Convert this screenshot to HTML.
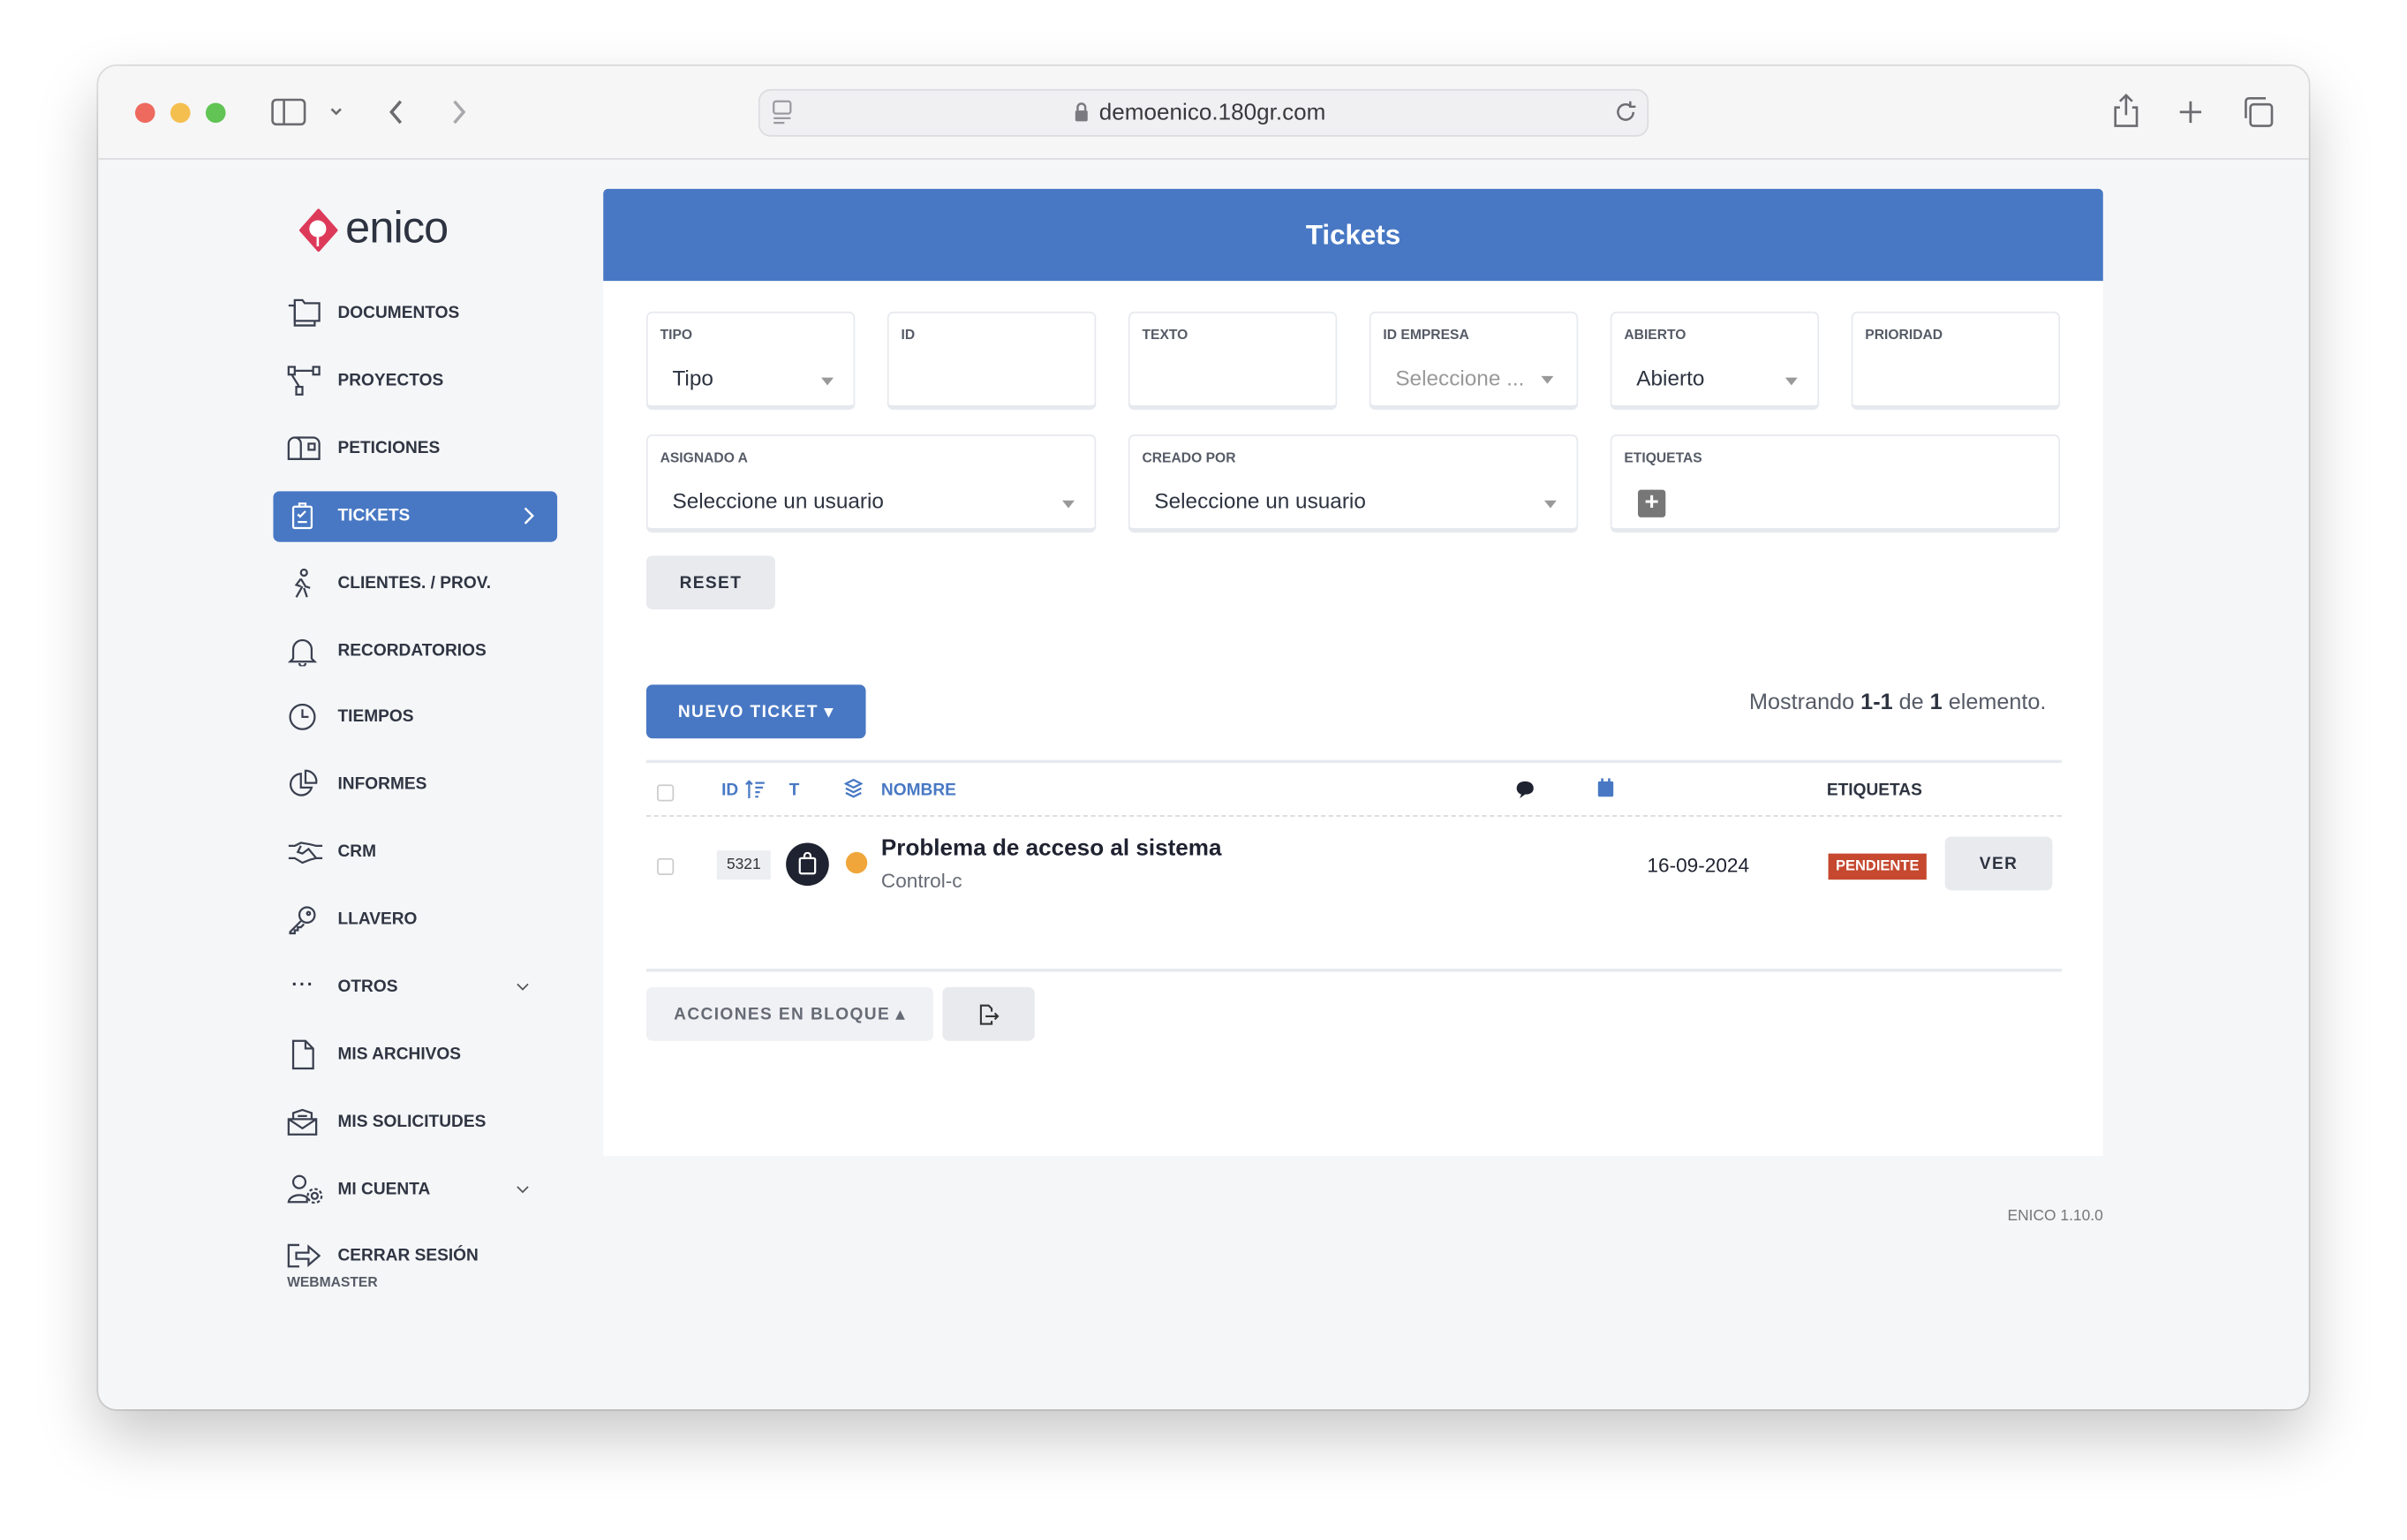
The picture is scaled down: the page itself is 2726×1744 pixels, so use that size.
<!DOCTYPE html>
<html><head><meta charset="utf-8"><style>
*{box-sizing:border-box;margin:0;padding:0}
html,body{width:2726px;height:1744px;overflow:hidden;background:#fff}
#s{position:absolute;left:0;top:0;width:1568px;height:1003px;transform:scale(1.73852);transform-origin:0 0;font-family:"Liberation Sans",sans-serif;color:#2d3340}
.a{position:absolute}
.win{left:64px;top:43px;width:1440px;height:875px;border-radius:12px;background:#f5f6f8;box-shadow:0 18px 40px rgba(0,0,0,.22),0 0 0 1px rgba(0,0,0,.12);overflow:hidden}
.tb{left:0;top:0;width:1440px;height:61px;background:#f6f6f7;border-bottom:1px solid #dcdcdf}
.dot{width:13px;height:13px;border-radius:50%;top:24px}
.mi{position:absolute;left:156px;font-size:11px;font-weight:bold;color:#2f3542;transform:translateY(-50%)}
.ic{position:absolute;left:123px;transform:translateY(-50%)}
.box{position:absolute;background:#fff;border:1.5px solid #e6e9ee;border-bottom-width:3px;border-radius:4px}
.lb{position:absolute;left:8px;top:9px;font-size:9px;font-weight:bold;color:#555b66}
.val{position:absolute;left:16px;top:34px;font-size:14px;color:#2d3340}
.car{position:absolute;top:42px;width:0;height:0;border-left:4px solid transparent;border-right:4px solid transparent;border-top:5px solid #999}
.btn{position:absolute;border-radius:4px;font-size:11px;font-weight:bold;letter-spacing:.8px;display:flex;align-items:center;justify-content:center}
</style></head><body><div id="s">
<div class="a win">
 <div class="a tb">
  <div class="a dot" style="left:24px;background:#ee6a5e"></div>
  <div class="a dot" style="left:47px;background:#f5bf4f"></div>
  <div class="a dot" style="left:70px;background:#61c454"></div>
  <svg class="a" style="left:112px;top:20px" width="24" height="20" viewBox="0 0 24 20" fill="none" stroke="#6b6b70" stroke-width="1.5"><rect x="1.5" y="2" width="21" height="16" rx="2.5"/><line x1="9" y1="2" x2="9" y2="18"/></svg>
  <svg class="a" style="left:150px;top:26px" width="10" height="8" viewBox="0 0 10 8" fill="none" stroke="#6b6b70" stroke-width="1.5"><path d="M2 2l3 3 3-3"/></svg>
  <svg class="a" style="left:188px;top:20px" width="12" height="20" viewBox="0 0 12 20" fill="none" stroke="#6b6b70" stroke-width="2"><path d="M9 3L3 10l6 7"/></svg>
  <svg class="a" style="left:229px;top:20px" width="12" height="20" viewBox="0 0 12 20" fill="none" stroke="#a8a8ac" stroke-width="2"><path d="M3 3l6 7-6 7"/></svg>
  <div class="a" style="left:430px;top:15px;width:580px;height:31px;border-radius:8px;background:#f0f0f2;border:1px solid #dcdce0"></div>
  <svg class="a" style="left:438px;top:22px" width="16" height="18" viewBox="0 0 16 18" fill="none" stroke="#9a9aa0" stroke-width="1.3"><rect x="2" y="1" width="11" height="8" rx="1.5"/><line x1="2" y1="12" x2="13" y2="12"/><line x1="2" y1="15" x2="9" y2="15"/></svg>
  <svg class="a" style="left:635px;top:23px" width="11" height="14" viewBox="0 0 11 14"><path d="M3 6V4a2.5 2.5 0 015 0v2" fill="none" stroke="#7a7a80" stroke-width="1.4"/><rect x="1.5" y="6" width="8" height="7" rx="1" fill="#7a7a80"/></svg>
  <div class="a" style="left:652px;top:22px;font-size:15px;color:#3a3a3e">demoenico.180gr.com</div>
  <svg class="a" style="left:987px;top:22px" width="16" height="16" viewBox="0 0 16 16" fill="none" stroke="#6b6b70" stroke-width="1.4"><path d="M13 8a5 5 0 11-2-4"/><path d="M11 1v3.5h3.5"/></svg>
  <svg class="a" style="left:1311px;top:17px" width="20" height="24" viewBox="0 0 20 24" fill="none" stroke="#6b6b70" stroke-width="1.5"><path d="M10 2v13M6 6l4-4 4 4"/><path d="M6 10H3v12h14V10h-3"/></svg>
  <svg class="a" style="left:1354px;top:21px" width="18" height="18" viewBox="0 0 18 18" stroke="#6b6b70" stroke-width="1.6"><path d="M9 2v14M2 9h14"/></svg>
  <svg class="a" style="left:1396px;top:19px" width="22" height="22" viewBox="0 0 22 22" fill="none" stroke="#6b6b70" stroke-width="1.5"><rect x="6" y="6" width="14" height="14" rx="2"/><path d="M3 15V4a2 2 0 012-2h11"/></svg>
 </div>
 <svg class="a" style="left:130px;top:93px" width="27" height="28" viewBox="0 0 27 28"><path d="M13.5 1L25 14 13.5 27 2 14z" fill="#dd3a5a" stroke="#dd3a5a" stroke-width="2" stroke-linejoin="round"/><circle cx="13" cy="13" r="5.5" fill="#fff"/><path d="M13 18.5v6" stroke="#fff" stroke-width="1.5"/></svg>
 <div class="a" style="left:161px;top:90px;font-size:29px;color:#2d3340;letter-spacing:-.5px;font-weight:300">enico</div>

 <svg class="ic" style="top:161px" width="22" height="20" viewBox="0 0 22 20" fill="none" stroke="#3a4050" stroke-width="1.3"><path d="M5 4V1.5h5l1.5 2H21V15H5z"/><path d="M1 5h4v13h13v-3"/></svg><div class="mi" style="top:161px">DOCUMENTOS</div>
 <svg class="ic" style="top:205px" width="22" height="20" viewBox="0 0 22 20" fill="none" stroke="#3a4050" stroke-width="1.3"><rect x="1" y="1" width="4" height="5"/><rect x="17" y="1" width="4" height="5"/><rect x="6" y="14" width="4" height="5"/><path d="M5 3.5h12M3 6l5 8"/></svg><div class="mi" style="top:205px">PROYECTOS</div>
 <svg class="ic" style="top:249px" width="22" height="18" viewBox="0 0 22 18" fill="none" stroke="#3a4050" stroke-width="1.3"><path d="M1 16V6a4 4 0 018 0v10zM5 2h12a4 4 0 014 4v10H9"/><rect x="14" y="6" width="4" height="4"/></svg><div class="mi" style="top:249px">PETICIONES</div>

 <div class="a" style="left:114px;top:277px;width:185px;height:33px;border-radius:4px;background:#4878c4"></div>
 <svg class="ic" style="top:293px;left:126px" width="14" height="18" viewBox="0 0 14 18" fill="none" stroke="#fff" stroke-width="1.3"><rect x="1" y="3" width="12" height="14" rx="1"/><path d="M5 3V1h4v2M4 8l1.5 1.5L9 6M4 13h6"/></svg>
 <div class="mi" style="top:293px;color:#fff">TICKETS</div>
 <svg class="a" style="left:276px;top:287px" width="8" height="12" viewBox="0 0 8 12" fill="none" stroke="#fff" stroke-width="1.4"><path d="M2 1l5 5-5 5"/></svg>

 <svg class="ic" style="top:337px;left:126px" width="14" height="20" viewBox="0 0 14 20" fill="none" stroke="#3a4050" stroke-width="1.3"><circle cx="8" cy="3" r="2"/><path d="M6 7l-3 4 3 1M6 7l3 5 3 1M7 12l-4 7M8 13l2 6"/></svg><div class="mi" style="top:337px">CLIENTES. / PROV.</div>
 <svg class="ic" style="top:381px" width="20" height="20" viewBox="0 0 20 20" fill="none" stroke="#3a4050" stroke-width="1.3"><path d="M4 15V9a6 6 0 0112 0v6l2 2H2z"/><path d="M8 18a2 2 0 004 0"/></svg><div class="mi" style="top:381px">RECORDATORIOS</div>
 <svg class="ic" style="top:424px" width="20" height="20" viewBox="0 0 20 20" fill="none" stroke="#3a4050" stroke-width="1.3"><circle cx="10" cy="10" r="8"/><path d="M10 5v5h4"/></svg><div class="mi" style="top:424px">TIEMPOS</div>
 <svg class="ic" style="top:468px" width="20" height="20" viewBox="0 0 20 20" fill="none" stroke="#3a4050" stroke-width="1.3"><path d="M9 3a7 7 0 107 9H9z"/><path d="M12 1v8h7a7 7 0 00-7-8z"/></svg><div class="mi" style="top:468px">INFORMES</div>
 <svg class="ic" style="top:512px" width="24" height="16" viewBox="0 0 24 16" fill="none" stroke="#3a4050" stroke-width="1.3"><path d="M1 4h4l4-2 6 1 4 1h4M1 12h4l5 3 5-2 4-1h4M9 4l-2 4 3 1 4-3 5 6"/></svg><div class="mi" style="top:512px">CRM</div>
 <svg class="ic" style="top:556px" width="20" height="20" viewBox="0 0 20 20" fill="none" stroke="#3a4050" stroke-width="1.3"><circle cx="13" cy="7" r="5"/><path d="M9 11l-7 7v1h3v-2h2v-2h2l2-2"/><circle cx="14" cy="6" r="1"/></svg><div class="mi" style="top:556px">LLAVERO</div>
 <div class="ic" style="top:598px;left:126px;font-size:12px;font-weight:bold;letter-spacing:1px">···</div><div class="mi" style="top:600px">OTROS</div>
 <svg class="a" style="left:272px;top:597px" width="9" height="6" viewBox="0 0 9 6" fill="none" stroke="#555" stroke-width="1"><path d="M1 1l3.5 3.5L8 1"/></svg>
 <svg class="ic" style="top:644px;left:125px" width="16" height="20" viewBox="0 0 16 20" fill="none" stroke="#3a4050" stroke-width="1.3"><path d="M2 1h8l5 5v13H2z"/><path d="M10 1v5h5"/></svg><div class="mi" style="top:644px">MIS ARCHIVOS</div>
 <svg class="ic" style="top:688px" width="20" height="18" viewBox="0 0 20 18" fill="none" stroke="#3a4050" stroke-width="1.3"><path d="M1 7h18v10H1zM1 7l9 6 9-6M4 7V3l6-2 6 2v4M7 5h6M7 7h6"/></svg><div class="mi" style="top:688px">MIS SOLICITUDES</div>
 <svg class="ic" style="top:732px" width="24" height="20" viewBox="0 0 24 20" fill="none" stroke="#3a4050" stroke-width="1.3"><circle cx="8" cy="5" r="4"/><path d="M1 18a7 5 0 0112-3v3z"/><circle cx="18" cy="14" r="2"/><circle cx="18" cy="14" r="4.5" stroke-dasharray="2 1.5"/></svg><div class="mi" style="top:732px">MI CUENTA</div>
 <svg class="a" style="left:272px;top:729px" width="9" height="6" viewBox="0 0 9 6" fill="none" stroke="#555" stroke-width="1"><path d="M1 1l3.5 3.5L8 1"/></svg>
 <svg class="ic" style="top:775px" width="22" height="16" viewBox="0 0 22 16" fill="none" stroke="#3a4050" stroke-width="1.3"><path d="M8 1H1v14h7M6 6h8V2l7 6-7 6v-4H6z"/></svg><div class="mi" style="top:775px">CERRAR SESIÓN</div>
 <div class="a" style="left:123px;top:787px;font-size:9px;font-weight:bold;color:#555b66">WEBMASTER</div>

 <div class="a" style="left:329px;top:80px;width:977px;height:630px;background:#fff">
  <div class="a" style="left:0;top:0;width:977px;height:60px;background:#4878c4;border-radius:3px 3px 0 0;color:#fff;font-size:18px;font-weight:bold;display:flex;align-items:center;justify-content:center">Tickets</div>
  <div class="box" style="left:28px;top:80px;width:136px;height:64px"><div class="lb">TIPO</div><div class="val">Tipo</div><div class="car" style="left:113px"></div></div>
  <div class="box" style="left:185px;top:80px;width:136px;height:64px"><div class="lb">ID</div></div>
  <div class="box" style="left:342px;top:80px;width:136px;height:64px"><div class="lb">TEXTO</div></div>
  <div class="box" style="left:499px;top:80px;width:136px;height:64px"><div class="lb">ID EMPRESA</div><div class="val" style="color:#999">Seleccione ...</div><div class="car" style="left:111px;top:41px"></div></div>
  <div class="box" style="left:656px;top:80px;width:136px;height:64px"><div class="lb">ABIERTO</div><div class="val">Abierto</div><div class="car" style="left:113px"></div></div>
  <div class="box" style="left:813px;top:80px;width:136px;height:64px"><div class="lb">PRIORIDAD</div></div>
  <div class="box" style="left:28px;top:160px;width:293px;height:64px"><div class="lb">ASIGNADO A</div><div class="val">Seleccione un usuario</div><div class="car" style="left:270px"></div></div>
  <div class="box" style="left:342px;top:160px;width:293px;height:64px"><div class="lb">CREADO POR</div><div class="val">Seleccione un usuario</div><div class="car" style="left:270px"></div></div>
  <div class="box" style="left:656px;top:160px;width:293px;height:64px"><div class="lb">ETIQUETAS</div><div class="a" style="left:17px;top:35px;width:18px;height:18px;background:#777;border-radius:2px;color:#fff;font-size:16px;line-height:18px;text-align:center;font-weight:bold">+</div></div>
  <div class="btn" style="left:28px;top:239px;width:84px;height:35px;background:#e8eaee;color:#2d3340">RESET</div>
  <div class="btn" style="left:28px;top:323px;width:143px;height:35px;background:#4878c4;color:#fff">NUEVO TICKET ▾</div>
  <div class="a" style="right:37px;top:327px;font-size:14.5px;color:#555b66">Mostrando <b style="color:#2d3340">1-1</b> de <b style="color:#2d3340">1</b> elemento.</div>
  <div class="a" style="left:28px;top:372px;width:922px;height:1.5px;background:#e6e9ee"></div>
  <div class="a" style="left:35px;top:388px;width:11px;height:11px;border:1px solid #ccc;border-radius:2px"></div>
  <div class="a" style="left:77px;top:386px;font-size:11px;font-weight:bold;color:#4878c4">ID</div>
  <svg class="a" style="left:92px;top:385px" width="14" height="13" viewBox="0 0 14 13" stroke="#4878c4" stroke-width="1.3" fill="none"><path d="M3 12V1M1 3l2-2 2 2M7 2h6M7 5h5M7 8h3M7 11h2"/></svg>
  <div class="a" style="left:121px;top:386px;font-size:11px;font-weight:bold;color:#4878c4">T</div>
  <svg class="a" style="left:157px;top:384px" width="12" height="13" viewBox="0 0 12 13" stroke="#4878c4" stroke-width="1.3" fill="none"><path d="M6 1l5 2.5-5 2.5-5-2.5zM1 6.5l5 2.5 5-2.5M1 9.5L6 12l5-2.5"/></svg>
  <div class="a" style="left:181px;top:386px;font-size:11px;font-weight:bold;color:#4878c4">NOMBRE</div>
  <svg class="a" style="left:594px;top:385px" width="13" height="13" viewBox="0 0 13 13"><path d="M6.5 1C3 1 1 3 1 5.5 1 7.5 2.5 9 4 9.5L3 12l3.5-2.5C10 9.5 12 8 12 5.5S10 1 6.5 1z" fill="#1f2230"/></svg>
  <svg class="a" style="left:647px;top:383px" width="12" height="14" viewBox="0 0 12 14"><rect x="1" y="3" width="10" height="10" rx="1" fill="#4878c4"/><rect x="3" y="1" width="1.5" height="3" fill="#4878c4"/><rect x="7.5" y="1" width="1.5" height="3" fill="#4878c4"/></svg>
  <div class="a" style="left:797px;top:386px;font-size:11px;font-weight:bold;color:#2d3340">ETIQUETAS</div>
  <div class="a" style="left:28px;top:408px;width:922px;border-top:1.5px dashed #d6d9de"></div>
  <div class="a" style="left:35px;top:436px;width:11px;height:11px;border:1px solid #ccc;border-radius:2px"></div>
  <div class="a" style="left:74px;top:431px;width:35px;height:19px;background:#eceef1;font-size:10px;color:#333;text-align:center;line-height:19px">5321</div>
  <div class="a" style="left:119px;top:426px;width:28px;height:28px;border-radius:50%;background:#1f2230"></div>
  <svg class="a" style="left:126px;top:432px" width="14" height="15" viewBox="0 0 14 15" fill="none" stroke="#fff" stroke-width="1.3"><rect x="2" y="4" width="10" height="10" rx="1"/><path d="M5 4V2.5a2 2 0 014 0V4"/></svg>
  <div class="a" style="left:158px;top:432px;width:14px;height:14px;border-radius:50%;background:#f0a63a"></div>
  <div class="a" style="left:181px;top:421px;font-size:15px;font-weight:bold;color:#1f2230">Problema de acceso al sistema</div>
  <div class="a" style="left:181px;top:443px;font-size:13px;color:#666b75">Control-c</div>
  <div class="a" style="left:680px;top:433px;font-size:13px;color:#1f2230">16-09-2024</div>
  <div class="a" style="left:798px;top:433px;width:64px;height:17px;background:#c5482f;color:#fff;font-size:9.5px;font-weight:bold;text-align:center;line-height:17px">PENDIENTE</div>
  <div class="btn" style="left:874px;top:422px;width:70px;height:35px;background:#e8eaee;color:#2d3340">VER</div>
  <div class="a" style="left:28px;top:508px;width:922px;height:1.5px;background:#e6e9ee"></div>
  <div class="btn" style="left:28px;top:520px;width:187px;height:35px;background:#f0f1f4;color:#666b75">ACCIONES EN BLOQUE ▴</div>
  <div class="btn" style="left:221px;top:520px;width:60px;height:35px;background:#e8eaee"><svg width="14" height="14" viewBox="0 0 14 14" fill="none" stroke="#333" stroke-width="1.2"><path d="M9 5V3L7 1H2v12h7v-2M5 8h8M11 6l2 2-2 2"/></svg></div>
 </div>
 <div class="a" style="right:134px;top:744px;font-size:10px;color:#777">ENICO 1.10.0</div>
</div>
</div></body></html>
